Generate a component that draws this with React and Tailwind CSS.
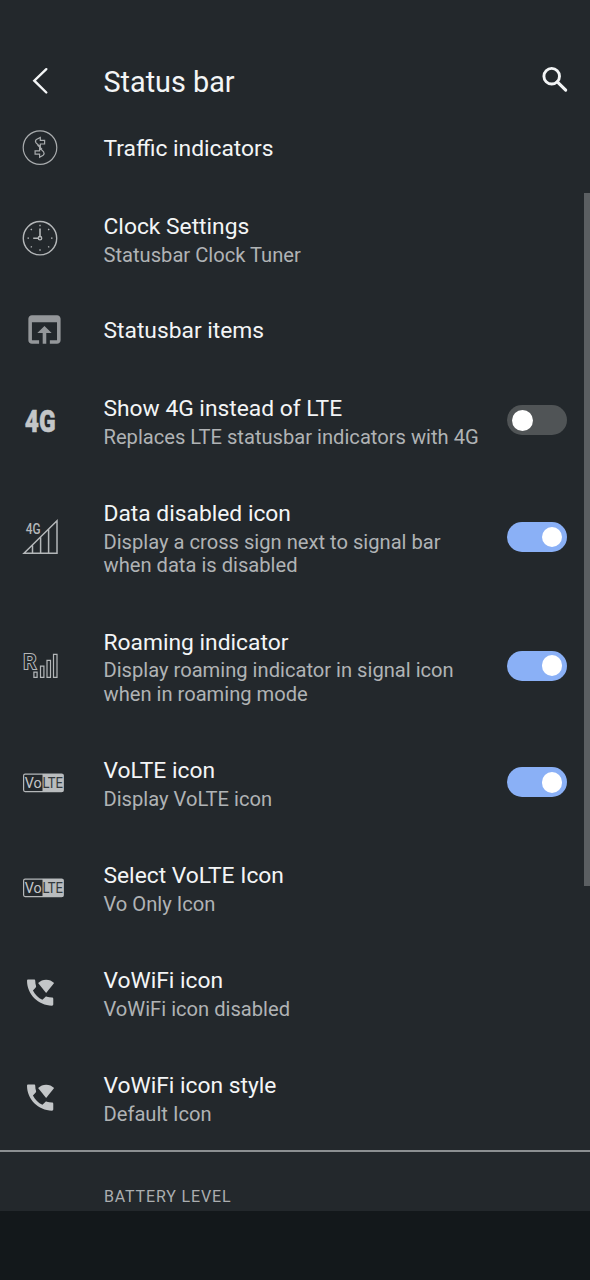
import React from 'react';

const TrafficIcon = () => (
  <svg className="w-[60px] h-10" viewBox="0 0 60 40" fill="none" stroke="#a9acae" strokeWidth="1.2">
    <circle cx="30" cy="19.6" r="16.8" />
    <path d="M30.3 9.4v3h4.3v3.6h-4.3v3l-4.2-4.2q-1.4-1.8.3-3.4z" />
    <path d="M29.6 29.2v-3h-4.5v-3.4h4.5v-3l4 4q1.2 1.8-.4 3.4z" />
    <path d="M27.6 17l4.4 4.2" />
  </svg>
);

const ClockIcon = () => (
  <svg className="w-[60px] h-10" viewBox="0 0 60 40" fill="none" stroke="#b4b7b9" strokeWidth="1.4">
    <g transform="translate(0 -.8)">
      <circle cx="30" cy="20" r="16.7" />
      <circle cx="30" cy="20" r="1.7" />
      <path d="M30 18.2v-7.8M28.2 20h-5" strokeWidth="1.6" />
      <path d="M30 6.5v1.5M30 31v1.5M17.5 20H19M41 20h1.5M20.8 10.8l1 1M38.2 28.2l1 1M39.2 10.8l-1 1M21.8 28.2l-1 1" strokeWidth="1.3" />
    </g>
  </svg>
);

const BrowserIcon = () => (
  <svg className="w-[60px] h-[43px]" viewBox="-7.25 0 33.5 24" fill="#94979a">
    <path d="M19 4H5c-1.11 0-2 .9-2 2v12c0 1.1.89 2 2 2h4v-2H5V8h14v10h-4v2h4c1.1 0 2-.9 2-2V6c0-1.1-.89-2-2-2zm-7 6l-4 4h3v6h2v-6h3l-4-4z" />
  </svg>
);

const FourGIcon = () => (
  <svg className="w-[60px] h-10" viewBox="0 0 60 40" fill="#c3c6c8" stroke="#c3c6c8" strokeWidth="0.5">
    <text x="14.8" y="30.8" fontFamily="Roboto, sans-serif" fontWeight="900" fontSize="30.5" textLength="30.8" lengthAdjust="spacingAndGlyphs">4G</text>
  </svg>
);

const DataIcon = () => (
  <svg className="w-[60px] h-10" viewBox="0 0 60 40" fill="none" stroke="#b4b7b9" strokeWidth="1.5">
    <path d="M14 36.2L47 3.8v32.4zM22.5 36v-7.6M30.6 36V20.2M38.6 36V12.4" />
    <text x="15.8" y="16.8" fill="#b4b7b9" stroke="none" fontFamily="Roboto, sans-serif" fontWeight="500" fontSize="14.5" textLength="14.8" lengthAdjust="spacingAndGlyphs">4G</text>
  </svg>
);

const RoamingIcon = () => (
  <svg className="w-[60px] h-10" viewBox="0 0 60 40" fill="none" stroke="#b4b7b9" strokeWidth="1.2">
    <text x="13.2" y="23" fill="#23282c" stroke="#b4b7b9" strokeWidth="2" paintOrder="stroke" fontFamily="Roboto, sans-serif" fontWeight="500" fontSize="20.5" textLength="13" lengthAdjust="spacingAndGlyphs">R</text>
    <path d="M23.9 26.2h3.2v5.2h-3.2zM30.5 20.2h3.4v11.2h-3.4zM37 14.3h3.5v17.1H37zM43.5 8.4H47v23h-3.5z" />
  </svg>
);

const VolteIcon = () => (
  <svg className="w-[60px] h-10" viewBox="0 0 60 40">
    <rect x="13.6" y="11.2" width="39.6" height="17.4" rx="1.5" fill="none" stroke="#b4b7b9" strokeWidth="1.2" />
    <path d="M32.5 11h19.7q1.3 0 1.3 1.3v15.4q0 1.3-1.3 1.3H32.5z" fill="#b9bcbe" />
    <text x="14.8" y="25.3" fill="#c3c6c8" fontFamily="Roboto, sans-serif" fontSize="15.5" textLength="17" lengthAdjust="spacingAndGlyphs">Vo</text>
    <text x="32.4" y="25.3" fill="#33383c" fontFamily="Roboto, sans-serif" fontSize="15.5" textLength="20.4" lengthAdjust="spacingAndGlyphs">LTE</text>
  </svg>
);

const WifiCallIcon = () => (
  <svg className="w-[60px] h-[35px]" viewBox="-8.57 0 41.14 24" fill="#c3c6c8">
    <path d="M20.2 15.4c-1.23 0-2.42-.2-3.53-.56-.35-.12-.74-.03-1.01.24l-2 1.97c-2.83-1.35-5-3.6-6.5-6.5l1.9-2c.27-.28.35-.67.24-1.02-.37-1.11-.56-2.3-.56-3.53 0-.54-.3-.9-.9-.9H4c-.6 0-.9.3-.9.9C3.1 13.3 10.8 21 20.2 21c.6 0 .9-.4.9-1v-3.7c0-.6-.4-.9-.9-.9z" />
    <path d="M16.2 12.4L10.7 5.5C12.2 4 14.1 3.2 16.2 3.2s4 .8 5.5 2.3z" />
  </svg>
);

const items = [
  { title: 'Traffic indicators', icon: TrafficIcon },
  { title: 'Clock Settings', lines: ['Statusbar Clock Tuner'], icon: ClockIcon },
  { title: 'Statusbar items', icon: BrowserIcon },
  { title: 'Show 4G instead of LTE', lines: ['Replaces LTE statusbar indicators with 4G'], icon: FourGIcon, on: false },
  { title: 'Data disabled icon', lines: ['Display a cross sign next to signal bar', 'when data is disabled'], icon: DataIcon, on: true },
  { title: 'Roaming indicator', lines: ['Display roaming indicator in signal icon', 'when in roaming mode'], icon: RoamingIcon, on: true },
  { title: 'VoLTE icon', lines: ['Display VoLTE icon'], icon: VolteIcon, on: true },
  { title: 'Select VoLTE Icon', lines: ['Vo Only Icon'], icon: VolteIcon },
  { title: 'VoWiFi icon', lines: ['VoWiFi icon disabled'], icon: WifiCallIcon },
  { title: 'VoWiFi icon style', lines: ['Default Icon'], icon: WifiCallIcon },
];

const rowHeights = ['h-[77px]', 'h-[105px]', 'h-[128.5px]'];

const Toggle = ({ on }) => (
  <button
    role="switch"
    aria-checked={on}
    className={`flex items-center w-[60px] h-[30px] mr-[23px] mt-[-0.5px] rounded-full px-[5px] shrink-0 ${
      on ? 'bg-[#8ab0f6] justify-end' : 'bg-[#505456] justify-start'
    }`}
  >
    <span className="w-[20.5px] h-[20.5px] rounded-full bg-white" />
  </button>
);

const Row = ({ title, lines = [], icon: Icon, on }) => (
  <div className={`flex items-center ${rowHeights[lines.length]}`}>
    <div className="w-[103.5px] pl-[10px] shrink-0">
      <Icon />
    </div>
    <div className={`flex-1 whitespace-nowrap ${lines.length > 0 ? 'pt-[3.5px]' : 'pt-[2px]'}`}>
      <div className="text-[22.8px] leading-[27px] text-[#f3f5f6]">{title}</div>
      {lines.length > 0 && (
        <div className="pt-[3.5px] text-[20.15px] leading-[23.5px] text-[#b0b3b5]">
          {lines.map((line) => (
            <div key={line}>{line}</div>
          ))}
        </div>
      )}
    </div>
    {on !== undefined && <Toggle on={on} />}
  </div>
);

const App = () => {
  return (
    <div className="relative flex flex-col w-[590px] h-[1280px] overflow-hidden bg-[#23282c] font-['Roboto',sans-serif]">
      <header className="flex items-center h-[109px] pt-[53px] shrink-0">
        <div className="w-[103.5px] pl-[28px] shrink-0">
          <svg className="w-6 h-[30px]" viewBox="0 0 24 30" fill="none" stroke="#f3f5f6" strokeWidth="2.4" strokeLinecap="round">
            <path d="M18.3 3.2L6.3 14.7l12 11.8" />
          </svg>
        </div>
        <h1 className="flex-1 pt-[2px] text-[28.8px] leading-[34px] text-[#f3f5f6]">Status bar</h1>
        <svg className="w-[30px] h-[30px] mr-5 -mt-1" viewBox="0 0 30 30" fill="none" stroke="#f3f5f6" strokeWidth="2.9">
          <circle cx="11.7" cy="12.2" r="7.8" />
          <path d="M17.3 17.8l8.4 8.4" strokeWidth="3.1" strokeLinecap="round" />
        </svg>
      </header>

      <main>
        {items.map((item) => (
          <Row key={item.title} {...item} />
        ))}
      </main>

      <section className="flex items-end h-[61px] pl-[104px] pb-[4px] border-t-2 border-[#8c9092] shrink-0">
        <h2 className="text-[16px] leading-5 tracking-[0.85px] text-[#abaeb0]">BATTERY LEVEL</h2>
      </section>

      <div className="flex-1 bg-[#13181b]" />

      {/* scroll thumb */}
      <div className="absolute right-0 top-[193px] w-[6px] h-[693px] bg-[#5b5f62]" />
    </div>
  );
};

export default App;
